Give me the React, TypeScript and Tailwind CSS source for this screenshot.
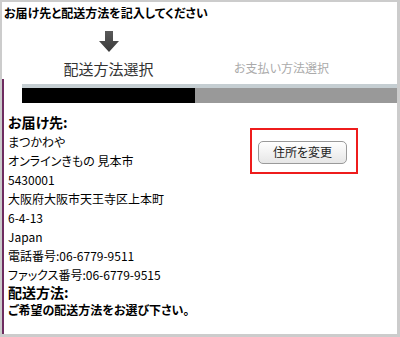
const jp = "font-['Noto_Sans_CJK_JP',sans-serif] [font-feature-settings:'palt']";

function DownArrow() {
  return (
    <svg width="22" height="22" viewBox="0 0 22 22" aria-hidden="true">
      <defs>
        <linearGradient id="arrowFill" x1="0" y1="0" x2="0" y2="1">
          <stop offset="0" stopColor="#5a5a5a" />
          <stop offset="1" stopColor="#3a3a3a" />
        </linearGradient>
      </defs>
      <path d="M7 0h8v10h6L11 21 1 10h6z" fill="url(#arrowFill)" />
    </svg>
  );
}

function Steps() {
  return (
    <div className="flex pl-[20px] mt-[10px]">
      <div className="w-[173px] flex flex-col items-center">
        <DownArrow />
        <p className="mt-[7px] text-[15px] leading-[18px] text-[#333]">配送方法選択</p>
      </div>
      <div className="w-[173px] flex flex-col items-center justify-end pb-[3px]">
        <p className="text-[12px] leading-[14px] text-[#aaa]">お支払い方法選択</p>
      </div>
    </div>
  );
}

function ProgressBar() {
  return (
    <div className="ml-[18px] mt-[5px]">
      <div className="h-[4px] bg-[#c5ced2]" />
      <div className="flex h-[15px]">
        <div className="w-[173px] bg-black" />
        <div className="flex-1 bg-[#999]" />
      </div>
    </div>
  );
}

const addressLines = [
  "まつかわや",
  "オンラインきもの 見本市",
  "5430001",
  "大阪府大阪市天王寺区上本町",
  "6-4-13",
  "Japan",
  "電話番号:06-6779-9511",
  "ファックス番号:06-6779-9515",
];

export default function App() {
  return (
    <div className={`w-[400px] h-[337px] bg-[#cccccc] pt-[2px] pl-[2px] pr-[3px] pb-[3px] ${jp}`}>
      <div className="h-full bg-white flex flex-col">
        <p className="px-[2px] pt-[2px] text-[12px] leading-[17px] font-bold text-black">
          お届け先と配送方法を記入してください
        </p>
        <Steps />

        <div className="flex-1 border-l-2 border-[#6e2c60] mt-[1px] pt-0">
          <ProgressBar />

          <div className="flex pl-[4px] mt-[9px]">
            <div className="w-[242px]">
              <p className="text-[14px] leading-[20px] font-bold text-black">お届け先:</p>
              {addressLines.map((line) => (
                <p key={line} className="text-[12px] leading-[19px] text-black whitespace-nowrap">
                  {line}
                </p>
              ))}
              <p className="text-[14px] leading-[17px] font-bold text-black">配送方法:</p>
              <p className="text-[12px] leading-[18px] font-bold text-black whitespace-nowrap">
                ご希望の配送方法をお選び下さい。
              </p>
            </div>

            <div className="mt-[16px] w-[108px] h-[46px] border-2 border-[#ee1c1c] pl-[6px] pt-[8px] self-start">
              <button
                type="button"
                className="w-[89px] h-[23px] rounded-[5px] border border-[#9a9a9a] bg-gradient-to-b from-white to-[#e6e6e6] text-[12px] leading-none text-[#222]"
              >
                住所を変更
              </button>
            </div>
          </div>
        </div>
      </div>
    </div>
  );
}
